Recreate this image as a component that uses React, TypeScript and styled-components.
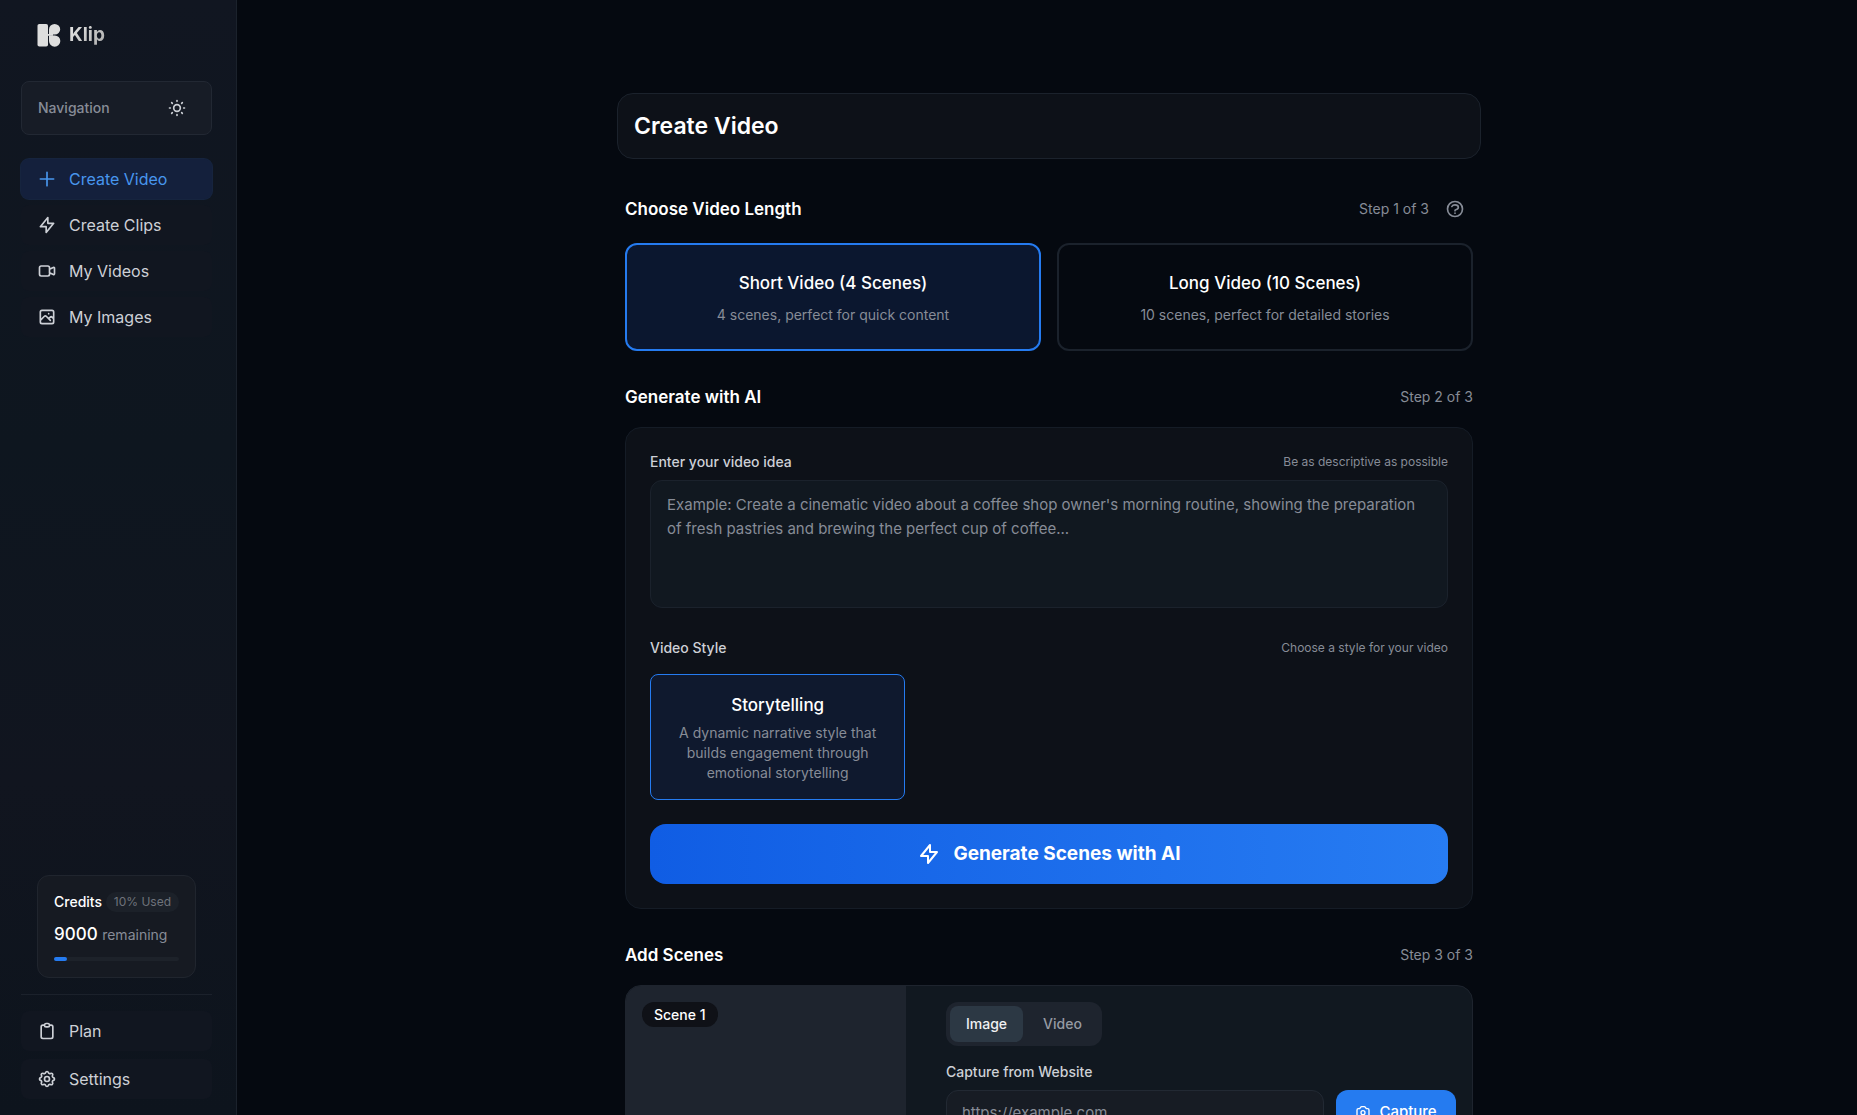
import React, { useState } from "react";
import styled, { createGlobalStyle } from "styled-components";

const c = {
  page: "#050910",
  sidebar: "#10151f",
  panel: "#0d1118",
  field: "#111820",
  line: "#1b222c",
  raised: "#1e242e",
  text: "#ffffff",
  soft: "#cdd0d6",
  muted: "#878c97",
  blue: "#257bf0",
};

const GlobalStyle = createGlobalStyle`
  *, *::before, *::after { box-sizing: border-box; }
  body {
    margin: 0;
    background: ${c.page};
    color: ${c.text};
    font-family: Inter, "Liberation Sans", sans-serif;
    font-size: 16px;
    line-height: 24px;
  }
  button, input, textarea { font: inherit; color: inherit; }
  button { cursor: pointer; }
  h1, h2, h3, p { margin: 0; }
`;

const Shell = styled.div`
  display: grid;
  grid-template-columns: 237px minmax(0, 1fr);
  height: 100vh;
  overflow: hidden;
`;

const Sidebar = styled.aside`
  display: flex;
  flex-direction: column;
  padding: 16px 24px 16px 21px;
  background: linear-gradient(180deg, #111621 0%, #0e161f 40%, #11151f 70%, #0d141d 100%);
  border-right: 1px solid ${c.line};
`;

const Brand = styled.a`
  display: flex;
  align-items: center;
  gap: 8px;
  height: 38px;
  padding-left: 16px;
  font-size: 19px;
  font-weight: 700;
  line-height: 28px;
  color: #dedede;
  text-decoration: none;
`;

const BrandName = styled.span`
  background: linear-gradient(135deg, #ececec, #a8a8a8);
  background-clip: text;
  color: transparent;
`;

const NavHeader = styled.div`
  display: flex;
  align-items: center;
  justify-content: space-between;
  margin-top: 27px;
  padding: 8px 16px;
  height: 54px;
  border: 1px solid #222833;
  border-radius: 8px;
  background: #171c26;
  color: ${c.muted};
  font-size: 14px;
  font-weight: 500;
`;

const IconButton = styled.button`
  display: flex;
  padding: 8px;
  border: 0;
  border-radius: 8px;
  background: transparent;
  color: ${c.soft};
`;

const NavGroup = styled.div`
  margin-top: 24px;
`;

const NavList = styled.nav<{ $gap: number }>`
  display: flex;
  flex-direction: column;
  gap: ${(p) => p.$gap}px;
`;

const NavLink = styled.a<{ $active?: boolean }>`
  display: flex;
  align-items: center;
  gap: 12px;
  height: 40px;
  padding: 0 16px;
  border-radius: 8px;
  background: ${(p) => (p.$active ? "#14203c" : "#111620")};
  box-shadow: ${(p) => (p.$active ? "0 0 0 1px #16243e" : "none")};
  color: ${(p) => (p.$active ? "#4896ee" : c.soft)};
  text-decoration: none;
`;

const Credits = styled.section`
  margin: auto 16px 16px;
  padding: 16px;
  border: 1px solid #20252e;
  border-radius: 12px;
  background: #161a22;
`;

const CreditsTop = styled.div`
  display: flex;
  align-items: center;
  justify-content: space-between;
  height: 20px;
  font-size: 14px;
  line-height: 20px;
  font-weight: 500;
  white-space: nowrap;
`;

const UsedChip = styled.span`
  padding: 0 8px;
  border-radius: 10px;
  background: #1c2129;
  color: #6f737b;
  font-size: 12px;
  font-weight: 400;
`;

const Balance = styled.p`
  margin-top: 8px;
  font-size: 17px;
  line-height: 28px;
  font-weight: 500;
  white-space: nowrap;
`;

const BalanceUnit = styled.span`
  color: ${c.muted};
  font-size: 14px;
  font-weight: 400;
`;

const Track = styled.div`
  height: 4px;
  margin: 8px 0 0;
  border-radius: 2px;
  background: #1d222a;
`;

const Fill = styled.div`
  height: 4px;
  border-radius: 2px;
  background: ${c.blue};
`;

const SidebarFoot = styled.div`
  padding-top: 16px;
  border-top: 1px solid #1b212b;
`;

const Main = styled.main`
  padding: 93px 0 0 4px;
  overflow-y: auto;
  scrollbar-width: none;
`;

const Column = styled.div`
  max-width: 864px;
  margin: 0 auto;
`;

const PageHeader = styled.header`
  padding: 16px;
  border: 1px solid ${c.line};
  border-radius: 16px;
  background: ${c.panel};
`;

const PageTitle = styled.h1`
  font-size: 23px;
  line-height: 32px;
  font-weight: 600;
`;

const Sections = styled.div`
  display: flex;
  flex-direction: column;
  gap: 32px;
  padding: 32px 8px;
`;

const SectionHead = styled.div<{ $tall?: boolean }>`
  display: flex;
  align-items: center;
  justify-content: space-between;
  height: ${(p) => (p.$tall ? 36 : 28)}px;
  margin-bottom: 16px;
`;

const SectionTitle = styled.h2`
  font-size: 17px;
  line-height: 28px;
  font-weight: 600;
`;

const Step = styled.span`
  display: flex;
  align-items: center;
  gap: 8px;
  color: ${c.muted};
  font-size: 14px;
`;

const HelpButton = styled(IconButton)`
  color: ${c.muted};
`;

const LengthGrid = styled.div`
  display: grid;
  grid-template-columns: 1fr 1fr;
  gap: 16px;
`;

const LengthCard = styled.button<{ $active: boolean }>`
  display: flex;
  flex-direction: column;
  align-items: center;
  gap: 8px;
  padding: 24px;
  border: 2px solid ${(p) => (p.$active ? c.blue : c.line)};
  border-radius: 12px;
  background: ${(p) => (p.$active ? "#0b172f" : "transparent")};
`;

const CardTitle = styled.span`
  font-size: 17px;
  line-height: 28px;
  font-weight: 500;
`;

const CardText = styled.span`
  color: ${c.muted};
  font-size: 14px;
  line-height: 20px;
`;

const Panel = styled.div`
  padding: 24px;
  border: 1px solid #151c26;
  border-radius: 16px;
  background: ${c.panel};
`;

const FieldHead = styled.div`
  display: flex;
  align-items: center;
  justify-content: space-between;
  height: 20px;
  margin-bottom: 8px;
`;

const Label = styled.label`
  color: ${c.soft};
  font-size: 14px;
  line-height: 20px;
  font-weight: 500;
`;

const Hint = styled.span`
  color: ${c.muted};
  font-size: 12px;
  line-height: 16px;
`;

const Idea = styled.textarea`
  display: block;
  width: 100%;
  height: 128px;
  padding: 12px 16px;
  border: 1px solid ${c.line};
  border-radius: 12px;
  background: ${c.field};
  font-size: 15px;
  line-height: 24px;
  resize: none;
  &::placeholder { color: ${c.muted}; opacity: 1; }
`;

const StyleBlock = styled.div`
  margin: 30px 0 24px;
`;

const StyleGrid = styled.div`
  display: grid;
  grid-template-columns: repeat(3, 1fr);
  gap: 16px;
  margin-top: 16px;
`;

const StyleCard = styled.button`
  display: flex;
  flex-direction: column;
  align-items: center;
  gap: 4px;
  padding: 16px 24px;
  border: 1px solid ${c.blue};
  border-radius: 8px;
  background: #0f192e;
`;

const Generate = styled.button`
  display: flex;
  align-items: center;
  justify-content: center;
  gap: 12px;
  width: 100%;
  height: 60px;
  border: 0;
  border-radius: 16px;
  background: linear-gradient(90deg, #105de4, #277cf2);
  font-size: 19px;
  font-weight: 700;
`;

const SceneCard = styled.div`
  display: flex;
  min-height: 360px;
  border: 1px solid #1e242e;
  border-radius: 16px;
  background: ${c.field};
  overflow: hidden;
`;

const Preview = styled.div`
  flex: 0 0 280px;
  padding: 16px;
  background: ${c.raised};
`;

const SceneChip = styled.span`
  display: inline-block;
  padding: 2px 12px;
  border-radius: 12px;
  background: #0f1117;
  font-size: 14px;
  line-height: 21px;
  font-weight: 500;
`;

const SceneForm = styled.div`
  flex: 1;
  display: flex;
  flex-direction: column;
  align-items: flex-start;
  padding: 16px 16px 16px 40px;
`;

const Tabs = styled.div`
  display: flex;
  gap: 4px;
  margin-bottom: 16px;
  padding: 4px;
  border-radius: 12px;
  background: ${c.raised};
`;

const Tab = styled.button<{ $active: boolean }>`
  height: 36px;
  padding: 0 16px;
  border: 0;
  border-radius: 8px;
  background: ${(p) => (p.$active ? "#2c3844" : "transparent")};
  color: ${(p) => (p.$active ? "#f0f1f3" : "#969aa3")};
  font-size: 14px;
  line-height: 20px;
  font-weight: 500;
`;

const CaptureRow = styled.div`
  display: flex;
  gap: 12px;
  width: 100%;
  margin-top: 8px;
`;

const UrlInput = styled.input`
  flex: 1;
  min-width: 0;
  height: 44px;
  padding: 0 15px;
  border: 1px solid #222933;
  border-radius: 12px;
  background: #171c24;
  font-size: 15px;
  &::placeholder { color: ${c.muted}; opacity: 1; }
`;

const Capture = styled.button`
  display: flex;
  align-items: center;
  justify-content: center;
  gap: 8px;
  width: 120px;
  height: 44px;
  border: 0;
  border-radius: 12px;
  background: ${c.blue};
  font-size: 15px;
  font-weight: 500;
`;

const paths = {
  plus: ["M12 4v16m8-8H4"],
  bolt: ["M13 10V3L4 14h7v7l9-11h-7z"],
  video: [
    "M15 10l4.553-2.276A1 1 0 0121 8.618v6.764a1 1 0 01-1.447.894L15 14M5 18h8a2 2 0 002-2V8a2 2 0 00-2-2H5a2 2 0 00-2 2v8a2 2 0 002 2z",
  ],
  image: [
    "M4 16l4.586-4.586a2 2 0 012.828 0L16 16m-2-2l1.586-1.586a2 2 0 012.828 0L20 14m-6-6h.01M6 20h12a2 2 0 002-2V6a2 2 0 00-2-2H6a2 2 0 00-2 2v12a2 2 0 002 2z",
  ],
  clipboard: [
    "M9 5H7a2 2 0 00-2 2v12a2 2 0 002 2h10a2 2 0 002-2V7a2 2 0 00-2-2h-2M9 5a2 2 0 002 2h2a2 2 0 002-2M9 5a2 2 0 012-2h2a2 2 0 012 2",
  ],
  cog: [
    "M10.325 4.317c.426-1.756 2.924-1.756 3.35 0a1.724 1.724 0 002.573 1.066c1.543-.94 3.31.826 2.37 2.37a1.724 1.724 0 001.065 2.572c1.756.426 1.756 2.924 0 3.35a1.724 1.724 0 00-1.066 2.573c.94 1.543-.826 3.31-2.37 2.37a1.724 1.724 0 00-2.572 1.065c-.426 1.756-2.924 1.756-3.35 0a1.724 1.724 0 00-2.573-1.066c-1.543.94-3.31-.826-2.37-2.37a1.724 1.724 0 00-1.065-2.572c-1.756-.426-1.756-2.924 0-3.35a1.724 1.724 0 001.066-2.573c-.94-1.543.826-3.31 2.37-2.37.996.608 2.296.07 2.572-1.065z",
    "M15 12a3 3 0 11-6 0 3 3 0 016 0z",
  ],
  sun: [
    "M12 3v1m0 16v1m9-9h-1M4 12H3m15.364 6.364l-.707-.707M6.343 6.343l-.707-.707m12.728 0l-.707.707M6.343 17.657l-.707.707M16 12a4 4 0 11-8 0 4 4 0 018 0z",
  ],
  help: [
    "M8.228 9c.549-1.165 2.03-2 3.772-2 2.21 0 4 1.343 4 3 0 1.4-1.278 2.575-3.006 2.907-.542.104-.994.54-.994 1.093m0 3h.01M21 12a9 9 0 11-18 0 9 9 0 0118 0z",
  ],
  camera: [
    "M3 9a2 2 0 012-2h.93a2 2 0 001.664-.89l.812-1.22A2 2 0 0110.07 4h3.86a2 2 0 011.664.89l.812 1.22A2 2 0 0018.07 7H19a2 2 0 012 2v9a2 2 0 01-2 2H5a2 2 0 01-2-2V9z",
    "M15 13a3 3 0 11-6 0 3 3 0 016 0z",
  ],
};

type IconName = keyof typeof paths;

function Icon({ name, size = 20 }: { name: IconName; size?: number }) {
  return (
    <svg width={size} height={size} viewBox="0 0 24 24" fill="none" stroke="currentColor" strokeWidth={2} strokeLinecap="round" strokeLinejoin="round" aria-hidden="true">
      {paths[name].map((d) => (
        <path key={d} d={d} />
      ))}
    </svg>
  );
}

function Logo() {
  return (
    <svg width="24" height="24" viewBox="0 0 24 24" fill="currentColor" aria-hidden="true">
      <rect x="0.5" y="1" width="10.5" height="22.600" rx="1.800" />
      <path d="M12 6.500A5.600 5.600 0 0 1 17.600 .900 5.600 5.300 0 0 1 23.200 6.200 5.400 5.400 0 0 1 17.800 11.600H12z" />
      <path d="M12 12.400H17.800A5.500 5.500 0 0 1 23.300 17.900 5.600 5.800 0 0 1 17.700 23.700 5.700 5.800 0 0 1 12 17.900z" />
      <rect x="10" y="11" width="6" height="1.800" />
    </svg>
  );
}

const navItems: { icon: IconName; label: string }[] = [
  { icon: "plus", label: "Create Video" },
  { icon: "bolt", label: "Create Clips" },
  { icon: "video", label: "My Videos" },
  { icon: "image", label: "My Images" },
];

const footItems: { icon: IconName; label: string }[] = [
  { icon: "clipboard", label: "Plan" },
  { icon: "cog", label: "Settings" },
];

const lengths = [
  { title: "Short Video (4 Scenes)", text: "4 scenes, perfect for quick content" },
  { title: "Long Video (10 Scenes)", text: "10 scenes, perfect for detailed stories" },
];

export default function App() {
  const [length, setLength] = useState(0);
  const [media, setMedia] = useState("Image");
  const used = 10;

  return (
    <>
      <GlobalStyle />
      <Shell>
        <Sidebar>
          <Brand href="#">
            <Logo />
            <BrandName>Klip</BrandName>
          </Brand>
          <NavHeader>
            Navigation
            <IconButton type="button" aria-label="Toggle theme">
              <Icon name="sun" />
            </IconButton>
          </NavHeader>
          <NavGroup>
            <NavList $gap={6}>
              {navItems.map((item, i) => (
                <NavLink key={item.label} href="#" $active={i === 0}>
                  <Icon name={item.icon} />
                  {item.label}
                </NavLink>
              ))}
            </NavList>
          </NavGroup>
          <Credits>
            <CreditsTop>
              Credits
              <UsedChip>{used}% Used</UsedChip>
            </CreditsTop>
            <Balance>
              9000 <BalanceUnit>remaining</BalanceUnit>
            </Balance>
            <Track>
              <Fill style={{ width: `${used}%` }} />
            </Track>
          </Credits>
          <SidebarFoot>
            <NavList $gap={8}>
              {footItems.map((item) => (
                <NavLink key={item.label} href="#">
                  <Icon name={item.icon} />
                  {item.label}
                </NavLink>
              ))}
            </NavList>
          </SidebarFoot>
        </Sidebar>
        <Main>
          <Column>
            <PageHeader>
              <PageTitle>Create Video</PageTitle>
            </PageHeader>
            <Sections>
              <section>
                <SectionHead $tall>
                  <SectionTitle>Choose Video Length</SectionTitle>
                  <Step>
                    Step 1 of 3
                    <HelpButton type="button" aria-label="Help">
                      <Icon name="help" />
                    </HelpButton>
                  </Step>
                </SectionHead>
                <LengthGrid>
                  {lengths.map((l, i) => (
                    <LengthCard key={l.title} type="button" $active={i === length} aria-pressed={i === length} onClick={() => setLength(i)}>
                      <CardTitle>{l.title}</CardTitle>
                      <CardText>{l.text}</CardText>
                    </LengthCard>
                  ))}
                </LengthGrid>
              </section>
              <section>
                <SectionHead>
                  <SectionTitle>Generate with AI</SectionTitle>
                  <Step>Step 2 of 3</Step>
                </SectionHead>
                <Panel>
                  <FieldHead>
                    <Label htmlFor="idea">Enter your video idea</Label>
                    <Hint>Be as descriptive as possible</Hint>
                  </FieldHead>
                  <Idea
                    id="idea"
                    placeholder="Example: Create a cinematic video about a coffee shop owner's morning routine, showing the preparation of fresh pastries and brewing the perfect cup of coffee..."
                  />
                  <StyleBlock>
                    <FieldHead>
                      <Label as="span">Video Style</Label>
                      <Hint>Choose a style for your video</Hint>
                    </FieldHead>
                    <StyleGrid>
                      <StyleCard type="button" aria-pressed="true">
                        <CardTitle>Storytelling</CardTitle>
                        <CardText>A dynamic narrative style that builds engagement through emotional storytelling</CardText>
                      </StyleCard>
                    </StyleGrid>
                  </StyleBlock>
                  <Generate type="button">
                    <Icon name="bolt" size={24} />
                    Generate Scenes with AI
                  </Generate>
                </Panel>
              </section>
              <section>
                <SectionHead>
                  <SectionTitle>Add Scenes</SectionTitle>
                  <Step>Step 3 of 3</Step>
                </SectionHead>
                <SceneCard>
                  <Preview>
                    <SceneChip>Scene 1</SceneChip>
                  </Preview>
                  <SceneForm>
                    <Tabs>
                      {["Image", "Video"].map((t) => (
                        <Tab key={t} type="button" $active={t === media} aria-pressed={t === media} onClick={() => setMedia(t)}>
                          {t}
                        </Tab>
                      ))}
                    </Tabs>
                    <Label htmlFor="site">Capture from Website</Label>
                    <CaptureRow>
                      <UrlInput id="site" type="url" placeholder="https://example.com" />
                      <Capture type="button">
                        <Icon name="camera" size={16} />
                        Capture
                      </Capture>
                    </CaptureRow>
                  </SceneForm>
                </SceneCard>
              </section>
            </Sections>
          </Column>
        </Main>
      </Shell>
    </>
  );
}
